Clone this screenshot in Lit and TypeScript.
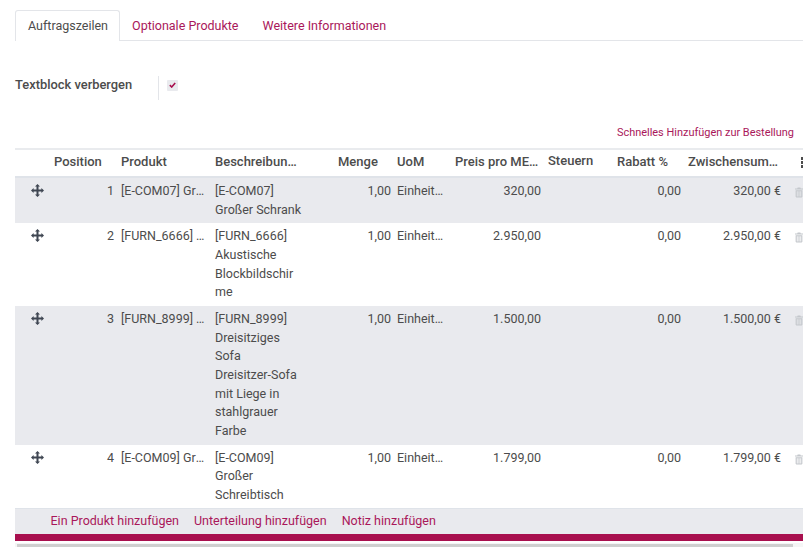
import { LitElement, html, css } from "lit";
import { customElement } from "lit/decorators.js";

const ROWS = [
  { pos: "1", prod: "[E-COM07] Großer Schrank", desc: ["[E-COM07]", "Großer Schrank"], price: "320,00", sub: "320,00 €", alt: true },
  { pos: "2", prod: "[FURN_6666] Akustische Blockbildschirme", desc: ["[FURN_6666]", "Akustische", "Blockbildschir", "me"], price: "2.950,00", sub: "2.950,00 €", alt: false },
  { pos: "3", prod: "[FURN_8999] Dreisitziges Sofa", desc: ["[FURN_8999]", "Dreisitziges", "Sofa", "Dreisitzer-Sofa", "mit Liege in", "stahlgrauer", "Farbe"], price: "1.500,00", sub: "1.500,00 €", alt: true },
  { pos: "4", prod: "[E-COM09] Großer Schreibtisch", desc: ["[E-COM09]", "Großer", "Schreibtisch"], price: "1.799,00", sub: "1.799,00 €", alt: false },
];

const move = html`<svg width="13" height="13" viewBox="0 0 13 13" aria-hidden="true"><path fill="#3f4652" d="M6.5 0 9 2.6H7.5v2.9h2.9V4L13 6.5 10.4 9V7.5H7.5v2.9H9L6.5 13 4 10.4h1.5V7.5H2.6V9L0 6.5 2.6 4v1.5h2.9V2.6H4z"/></svg>`;
const trash = html`<svg width="9" height="11" viewBox="0 0 9 11" aria-hidden="true"><path fill="#c4c7cc" d="M3 0h3l.5 1H9v1H0V1h2.5zM.7 3h7.6v7.2l-.8.8h-6l-.8-.8zM2 4v6h1V4zm2 0v6h1V4zm2 0v6h1V4z"/></svg>`;

@customElement("app-root")
export class AppRoot extends LitElement {
  static styles = css`
    :host { display: block; width: 810px; height: 547px; overflow: hidden; background: #fff; font-family: Roboto, sans-serif; font-size: 12.5px; color: #4c4c4c; line-height: 18.65px; }
    .page { padding: 10px 7px 0 15px; display: flex; flex-direction: column; }
    .tabs { display: flex; height: 31px; border-bottom: 1px solid #e3e5e9; box-sizing: border-box; }
    .tab { padding: 7px 12px 0 12px; color: #a9175a; white-space: nowrap; }
    .tab.active { color: #4c4c4c; border: 1px solid #e3e5e9; border-bottom: none; background: #fff; height: 31px; box-sizing: border-box; padding: 6px 11px 0 12px; border-radius: 3px 3px 0 0; }
    .opt { display: flex; align-items: center; height: 24px; margin-top: 35px; }
    .opt .lbl { width: 143px; font-weight: 500; font-size: 12.9px; margin-bottom: 6px; }
    .opt .sep { width: 1px; height: 24px; background: #e3e5e9; }
    .check { width: 11px; height: 11px; margin: 0 0 6px 8px; background: #e9eaee; border-radius: 1px; display: flex; align-items: center; justify-content: center; }
    .quick { margin-top: 22px; padding: 0 9px 4px 0; text-align: right; color: #a9175a; font-size: 10.95px; line-height: 22px; }
    .row { display: grid; grid-template-columns: 33px 67px 94px 123px 59px 58px 93px 69px 71px 100px 21px; }
    .row > div { padding: 0 1px 0 6px; min-width: 0; white-space: nowrap; overflow: hidden; text-overflow: ellipsis; }
    .head { height: 30px; padding-bottom: 1px; border-top: 2px solid #e9ebee; border-bottom: 2px solid #dfe3e9; box-sizing: border-box; font-weight: 500; font-size: 13px; align-items: center; }
    .head > div { padding-right: 0; }
    .head .t { transform: translateY(-1px); }
    .body { padding: 4px 0; box-sizing: border-box; }
    .body.alt { background: #e9eaee; }
    .num { text-align: right; }
    .row > .qty { padding-right: 0; }
    .row > .uom { padding-right: 4px; }
    .body .desc { white-space: normal; overflow: visible; }
    .row > .move { display: flex; padding: 2px 0 0 16px; overflow: visible; }
    .row > .del { display: flex; padding: 5px 0 0 13px; }
    .foot { display: flex; gap: 15px; height: 25.5px; margin-top: -0.5px; align-items: center; padding-left: 35.5px; background: #e9eaee; border-top: 1px solid #dfe3e9; box-sizing: border-box; color: #a9175a; }
    .bar { height: 7px; background: #a80f4e; }
    .scroll { height: 4px; margin-top: 2px; background: #f5f5f5; padding-top: 1px; box-sizing: border-box; }
    .scroll div { height: 3px; margin: 0 10px 0 2px; background: #cfcfcf; }
    .row > .dotcell { padding: 0; overflow: visible; }
    .dots { display: flex; flex-direction: column; gap: 1px; padding-left: 19px; }
    .dots i { width: 2px; height: 3px; background: #4c4c4c; display: block; }
  `;

  render() {
    return html`<div class="page">
      <div class="tabs">
        <div class="tab active">Auftragszeilen</div>
        <div class="tab">Optionale Produkte</div>
        <div class="tab">Weitere Informationen</div>
      </div>
      <div class="opt">
        <div class="lbl">Textblock verbergen</div>
        <div class="sep"></div>
        <div class="check"><svg width="7" height="6" viewBox="0 0 7 6"><path d="M.8 3.2 2.7 5 6.2 1" fill="none" stroke="#a80f4e" stroke-width="1.6"/></svg></div>
      </div>
      <div class="quick">Schnelles Hinzufügen zur Bestellung</div>
      <div class="row head">
        <div></div>
        <div>Position</div>
        <div>Produkt</div>
        <div>Beschreibun…</div>
        <div>Menge</div>
        <div>UoM</div>
        <div>Preis pro ME…</div>
        <div class="t">Steuern</div>
        <div>Rabatt %</div>
        <div>Zwischensum…</div>
        <div class="dotcell"><div class="dots"><i></i><i></i><i></i></div></div>
      </div>
      ${ROWS.map(
        (r) => html`<div class="row body ${r.alt ? "alt" : ""}">
          <div class="move">${move}</div>
          <div class="num">${r.pos}</div>
          <div>${r.prod}</div>
          <div class="desc">${r.desc.map((l) => html`<div>${l}</div>`)}</div>
          <div class="num qty">1,00</div>
          <div class="uom">Einheiten</div>
          <div class="num">${r.price}</div>
          <div></div>
          <div class="num">0,00</div>
          <div class="num">${r.sub}</div>
          <div class="del">${trash}</div>
        </div>`
      )}
      <div class="foot">
        <span>Ein Produkt hinzufügen</span>
        <span>Unterteilung hinzufügen</span>
        <span>Notiz hinzufügen</span>
      </div>
      <div class="bar"></div>
      <div class="scroll"><div></div></div>
    </div>`;
  }
}
